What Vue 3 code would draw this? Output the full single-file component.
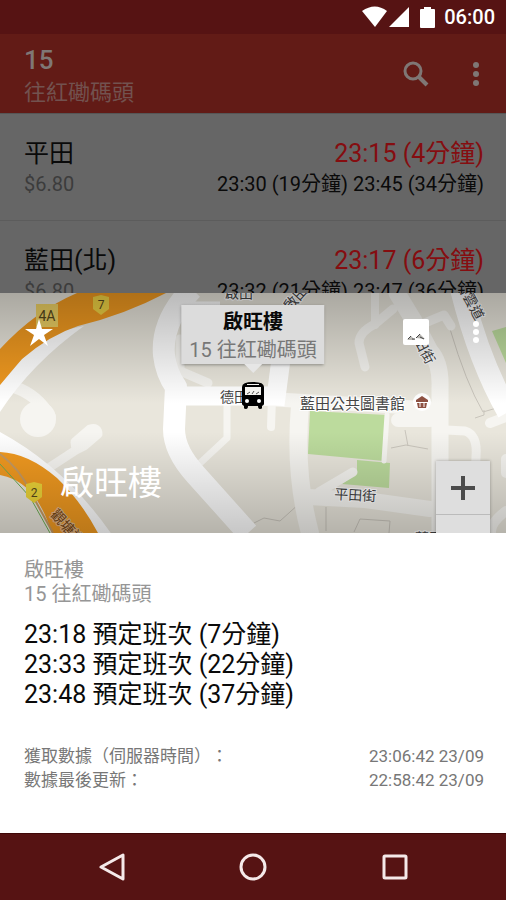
<template>
  <div class="phone">
    <header class="status-bar">
      <svg class="status-icons" viewBox="0 0 76 24" aria-hidden="true">
        <path d="M0 6 Q13 -3 25 6 L13 22 Z" />
        <path d="M47 2 V22 H27 Z" />
        <path d="M59 4 H62 V2 H69 V4 H72 Q73 4 73 5 V22 Q73 23 72 23 H59 Q58 23 58 22 V5 Q58 4 59 4 Z" />
      </svg>
      <time class="clock">06:00</time>
    </header>

    <main class="route-page">
      <div class="app-bar">
        <div class="app-title">
          <h1>{{ route.number }}</h1>
          <p>{{ route.direction }}</p>
        </div>
        <button class="icon-button" aria-label="搜尋">
          <svg width="26" height="26" viewBox="0 0 26 26">
            <circle cx="10" cy="10" r="8" fill="none" stroke="currentColor" stroke-width="3" />
            <path d="M16 16 L24 24" stroke="currentColor" stroke-width="4" />
          </svg>
        </button>
        <button class="icon-button more" aria-label="更多">
          <svg width="8" height="24" viewBox="0 0 8 24" fill="currentColor">
            <circle cx="4" cy="3" r="3" />
            <circle cx="4" cy="12" r="3" />
            <circle cx="4" cy="21" r="3" />
          </svg>
        </button>
      </div>
      <ul class="stop-list">
        <li v-for="stop in stops" :key="stop.name" class="stop">
          <div class="stop-line">
            <span>{{ stop.name }}</span>
            <span class="next">{{ stop.next }}</span>
          </div>
          <div class="stop-line small">
            <span class="fare">{{ stop.fare }}</span>
            <span>{{ stop.later }}</span>
          </div>
        </li>
      </ul>
    </main>

    <section class="sheet">
      <div class="map">
        <svg class="map-canvas" viewBox="0 0 506 240" preserveAspectRatio="xMidYMid slice" aria-hidden="true">
          <defs>
            <linearGradient id="scrim" x1="0" y1="0" x2="0" y2="1">
              <stop offset="0" stop-color="#000" stop-opacity="0.27" />
              <stop offset="0.46" stop-color="#000" stop-opacity="0" />
              <stop offset="0.58" stop-color="#000" stop-opacity="0" />
              <stop offset="1" stop-color="#000" stop-opacity="0.22" />
            </linearGradient>
          </defs>
          <rect width="506" height="240" fill="#e9e6dc" />

          <!-- footpaths and plot lines -->
          <g fill="none" stroke="#c9c5bc" stroke-width="1">
            <path d="M450 36 Q466 90 483 119 L500 114" />
            <path d="M391 155 L406 152 L428 156 M405 137 L408 153" />
            <path d="M254 230 L264 225 L280 228 L300 210 M326 214 V238 M354 239 L360 226 L390 228 L389 240" />
            <path d="M475 125 L484 122 V117" />
          </g>

          <!-- parks -->
          <g fill="#bcdb9d">
            <path d="M310 118 L387 122 L384 168 L308 161 Z" />
            <path d="M357 167 L390 170 L389 195 L342 191 L357 180 Z" />
            <path d="M492 38 L506 34 V70 Z" />
          </g>

          <!-- minor streets -->
          <g fill="none" stroke="#f6f5f1" stroke-linecap="round" stroke-linejoin="round">
            <path d="M14 94 Q38 102 50 124" stroke-width="12" />
            <circle cx="38" cy="126" r="15" fill="#f6f5f1" stroke-width="6" />
            <path d="M50 174 L76 157 L75 149 L90 136 Q98 134 98 141 L84 153 L76 157" stroke-width="9" />
            <path d="M365 74 L359 50 Q359 39 375 31 L393 16" stroke-width="9" />
            <path d="M375 0 V32" stroke-width="8" />
            <path d="M397 0 L414 28 L430 58 Q441 70 440 95 V240" stroke-width="17" />
            <path d="M420 32 L444 22 L451 33" stroke-width="9" />
            <path d="M180 46 V78 L208 90" stroke-width="9" />
            <path d="M227 112 V145 L198 172" stroke-width="7" />
            <path d="M272 105 L271 134" stroke-width="8" />
            <path d="M300 113 Q294 180 310 240" stroke-width="18" />
            <path d="M252 105 L438 116" stroke-width="14" />
            <path d="M308 204 L365 207 L430 216" stroke-width="16" />
            <path d="M319 199 L353 179" stroke-width="9" />
            <path d="M387 122 L384 168" stroke-width="5" />
            <path d="M446 137 L465 138 Q478 142 476 164 L475 190" stroke-width="9" />
            <path d="M490 130 L506 124 M506 166 V180 M506 218 Q490 230 491 240" stroke-width="10" />
            <path d="M398 127 H430" stroke-width="14" />
          </g>

          <!-- main roads -->
          <g fill="none" stroke="#fff" stroke-linejoin="round">
            <path d="M192 -4 Q161 28 164 62 Q166 80 176 94 L174 136 Q174 158 196 182 L248 240" stroke-width="22" />
            <path d="M168 103 H280" stroke-width="19" />
            <path d="M184 12 H220" stroke-width="7" />
            <path d="M281 66 L275 112" stroke-width="19" />
            <path d="M461 -4 Q479 68 508 119" stroke-width="22" />
            <path d="M-6 146 Q58 180 104 246" stroke-width="18" />
          </g>
          <path d="M0 119 Q32 70 84 33 L50 40 L22 66 L0 92 Z" fill="#fff" />

          <!-- highways -->
          <path d="M0 56 Q35 18 77 0 H166 Q124 22 78 33 Q50 42 22 66 Q15 74 0 92 Z" fill="#f19a20" />
          <path d="M0 159 Q28 160 57 185 Q81 208 98 240 H52 Q42 210 28 196 Q14 184 0 182 Z" fill="#f19a20" />
          <path d="M0 161 Q20 176 30 198 L53 240" fill="none" stroke="#c69a62" stroke-width="2" />
          <path d="M0 171 L30 204 L50 240" fill="none" stroke="#6cab50" stroke-width="1" />

          <!-- route shields -->
          <rect x="36" y="11" width="22" height="23" fill="#efd264" />
          <path d="M93 4 L101 2 L109 4 V16 L101 22 L93 16 Z" fill="#f2d545" />
          <path d="M26 191 L34 189 L42 191 V204 L34 210 L26 204 Z" fill="#eed538" />
          <g class="shield-text">
            <text x="47" y="28" font-size="14">4A</text>
            <text x="101" y="16" font-size="12">7</text>
            <text x="34" y="204" font-size="12">2</text>
          </g>

          <g class="street-text">
            <text x="220" y="109">德田街</text>
            <text class="place" x="300" y="116">藍田公共圖書館</text>
            <text x="334" y="206" transform="rotate(3 334 206)">平田街</text>
            <text x="290" y="19" transform="rotate(-48 290 19)">啟田道</text>
            <text x="407" y="35" transform="rotate(62 407 35)">啟田街</text>
            <text x="456" y="-9" transform="rotate(62 456 -9)">碧雲道</text>
            <text x="415" y="250">藍田(</text>
            <text x="225" y="5">啟田</text>
            <text class="highway" x="50" y="222" transform="rotate(48 50 222)">觀塘道</text>
          </g>

          <circle cx="422" cy="109" r="9" fill="#fff" />
          <path d="M416 107 L422 103 L428 107 V109 H416 Z M417 110 H427 L426 115 H418 Z" fill="#8e5142" />
          <path d="M420 110 V114 M424 110 V114" stroke="#fff" />

          <rect width="506" height="240" fill="url(#scrim)" />
        </svg>

        <div class="info-window">
          <strong>{{ selected }}</strong>
          <span>{{ route.number }} {{ route.direction }}</span>
        </div>
        <svg class="bus-pin" width="22" height="27" viewBox="0 0 22 27" aria-hidden="true">
          <path d="M0 5 Q0 0 11 0 Q22 0 22 5 V22 Q22 23 20 24 V26 Q20 27 18 27 Q16 27 16 24 H6 Q6 27 4 27 Q2 27 2 26 V24 Q0 23 0 22 Z" />
          <path d="M5 2 H17 V3 H5 Z M3 5 H19 V13 H3 Z" fill="#f4f3ef" />
          <path d="M5 12 L8 10 M10 12 L12 9 M14 12 L17 10" stroke="#555" />
          <circle cx="5" cy="19" r="2" fill="#fff" />
          <circle cx="17" cy="19" r="2" fill="#fff" />
        </svg>

        <div class="map-actions">
          <button class="icon-button" aria-label="收藏">
            <svg width="28" height="27" viewBox="0 0 28 27" fill="currentColor">
              <path d="M14 0 L17 10 H28 L19 16 L23 27 L14 20 L5 27 L9 16 L0 10 H11 Z" />
            </svg>
          </button>
          <button class="icon-button photo" aria-label="街景">
            <svg width="26" height="26" viewBox="0 0 26 26">
              <rect width="26" height="26" rx="2" fill="#fff" />
              <path d="M4 21 L8 17 L12 21 Z M13 19 L17 15 L22 20 Z" fill="#b9b7b3" />
              <path d="M5 20 L8 17 M9 20 H12 M13 19 L17 15 M17 18 L21 20" stroke="#444" fill="none" />
            </svg>
          </button>
          <button class="icon-button more" aria-label="更多">
            <svg width="8" height="24" viewBox="0 0 8 24" fill="currentColor">
              <circle cx="4" cy="4" r="3" />
              <circle cx="4" cy="12" r="3" />
              <circle cx="4" cy="20" r="3" />
            </svg>
          </button>
        </div>
        <h2 class="map-title">{{ selected }}</h2>
        <div class="zoom-control">
          <button aria-label="放大">
            <svg width="24" height="24" viewBox="0 0 24 24">
              <path d="M12 0 V24 M0 12 H24" stroke="#4b4b4b" stroke-width="4" />
            </svg>
          </button>
          <button aria-label="縮小"></button>
        </div>
      </div>

      <div class="details">
        <p class="caption">{{ selected }}<br>{{ route.number }} {{ route.direction }}</p>
        <ul class="departures">
          <li v-for="item in departures" :key="item">{{ item }}</li>
        </ul>
        <dl class="updates">
          <div v-for="row in updates" :key="row.label">
            <dt>{{ row.label }}</dt>
            <dd>{{ row.value }}</dd>
          </div>
        </dl>
      </div>
    </section>

    <nav class="nav-bar">
      <button aria-label="返回">
        <svg width="28" height="28" viewBox="0 0 28 28"><path d="M26 2 V26 L4 14 Z" /></svg>
      </button>
      <button aria-label="主畫面">
        <svg width="28" height="28" viewBox="0 0 28 28"><circle cx="14" cy="14" r="12" /></svg>
      </button>
      <button aria-label="概覽">
        <svg width="28" height="28" viewBox="0 0 28 28"><rect x="3" y="3" width="22" height="22" rx="1" /></svg>
      </button>
    </nav>
  </div>
</template>

<script setup>
const route = { number: '15', direction: '往紅磡碼頭' };

const stops = [
  { name: '平田', fare: '$6.80', next: '23:15 (4分鐘)', later: '23:30 (19分鐘) 23:45 (34分鐘)' },
  { name: '藍田(北)', fare: '$6.80', next: '23:17 (6分鐘)', later: '23:32 (21分鐘) 23:47 (36分鐘)' }
];

const selected = '啟旺樓';

const departures = [
  '23:18 預定班次 (7分鐘)',
  '23:33 預定班次 (22分鐘)',
  '23:48 預定班次 (37分鐘)'
];

const updates = [
  { label: '獲取數據（伺服器時間）：', value: '23:06:42 23/09' },
  { label: '數據最後更新：', value: '22:58:42 23/09' }
];
</script>

<style>
body {
  margin: 0;
}
</style>

<style scoped>
.phone {
  display: flex;
  flex-direction: column;
  height: 100vh;
  min-height: 760px;
  overflow: hidden;
  background: #666;
  color: #0a0a0a;
  font-family: Roboto, "Noto Sans CJK TC", sans-serif;
}

h1,
h2,
p,
ul,
dl,
dd {
  margin: 0;
  padding: 0;
}

ul {
  list-style: none;
}

button {
  display: flex;
  align-items: center;
  justify-content: center;
  padding: 0;
  border: 0;
  background: none;
  color: inherit;
  cursor: pointer;
}

.status-bar {
  display: flex;
  flex: none;
  align-items: center;
  justify-content: flex-end;
  gap: 6px;
  height: 34px;
  padding-right: 11px;
  background: #561313;
  color: #fff;
}

.status-icons {
  width: 76px;
  height: 24px;
  fill: #fff;
}

.clock {
  font-size: 20px;
  font-weight: 500;
  line-height: 34px;
}

.route-page {
  display: flex;
  flex: 1 1 0;
  flex-direction: column;
  min-height: 0;
  overflow: hidden;
}

.app-bar {
  display: flex;
  flex: none;
  align-items: center;
  box-sizing: border-box;
  height: 79px;
  padding: 0 6px 0 24px;
  background: #621b16;
  color: #7f7775;
}

.app-title {
  flex: 1;
  padding-top: 6px;
}

.app-title h1 {
  font-size: 26px;
  font-weight: 500;
  line-height: 32px;
}

.app-title p {
  color: #72524f;
  font-size: 22px;
  line-height: 34px;
}

.icon-button {
  width: 48px;
  height: 48px;
}

.app-bar .more {
  margin-left: 12px;
}

.stop-list {
  border-top: 1px solid #565656;
}

.stop {
  box-sizing: border-box;
  height: 107px;
  padding: 24px 22px 0 24px;
  border-bottom: 1px solid #5c5c5c;
}

.stop-line {
  display: flex;
  justify-content: space-between;
  font-size: 25px;
  line-height: 32px;
}

.stop-line.small {
  font-size: 20px;
  line-height: 28px;
}

.next {
  color: #850d10;
}

.fare {
  color: #3c3c3c;
}

.sheet {
  flex: none;
  background: #fff;
}

.map {
  position: relative;
  height: 240px;
  overflow: hidden;
}

.map-canvas {
  position: absolute;
  inset: 0;
  width: 100%;
  height: 100%;
}

.shield-text {
  fill: #57481c;
  text-anchor: middle;
}

.street-text {
  fill: #444;
  font-size: 14px;
  stroke: #fff;
  stroke-width: 2px;
  paint-order: stroke;
}

.street-text .place {
  font-size: 15px;
}

.street-text .highway {
  fill: #76440f;
  stroke: #e5b98a;
}

.info-window {
  position: absolute;
  top: 12px;
  left: 50%;
  display: flex;
  flex-direction: column;
  align-items: center;
  box-sizing: border-box;
  height: 59px;
  padding: 3px 8px;
  transform: translateX(-50%);
  background: #dcdcdc;
  box-shadow: 0 1px 3px rgba(0, 0, 0, 0.35);
  font-size: 20px;
  line-height: 28px;
  white-space: nowrap;
}

.info-window::after {
  position: absolute;
  top: 59px;
  left: 50%;
  border: 9px solid transparent;
  border-top-color: #e6e6e6;
  border-bottom: 0;
  transform: translateX(-50%);
  content: "";
}

.info-window strong {
  font-weight: 700;
}

.info-window span {
  color: #777;
}

.bus-pin {
  position: absolute;
  top: 89px;
  left: 50%;
  transform: translateX(-50%);
}

.map-actions {
  position: absolute;
  top: 15px;
  right: 6px;
  left: 15px;
  display: flex;
  color: #fff;
}

.map-actions .photo {
  margin-left: auto;
}

.map-actions .more {
  margin-left: 12px;
}

.map-title {
  position: absolute;
  bottom: 26px;
  left: 60px;
  color: #fff;
  font-size: 34px;
  font-weight: 400;
  line-height: 48px;
}

.zoom-control {
  position: absolute;
  top: 168px;
  right: 16px;
  width: 54px;
  background: #dedede;
  box-shadow: 0 0 3px rgba(0, 0, 0, 0.3);
}

.zoom-control button {
  width: 100%;
  height: 53px;
}

.zoom-control button + button {
  border-top: 1px solid #bbb;
}

.details {
  padding: 25px 22px 41px 24px;
}

.caption {
  color: #969696;
  font-size: 20px;
  line-height: 24px;
}

.departures {
  margin-top: 14px;
  font-size: 25px;
  line-height: 30px;
}

.updates {
  margin-top: 34px;
  color: #777;
  font-size: 17px;
  line-height: 24px;
  text-spacing-trim: space-all;
}

.updates div {
  display: flex;
  justify-content: space-between;
}

.nav-bar {
  display: flex;
  flex: none;
  align-items: center;
  justify-content: center;
  box-sizing: border-box;
  height: 67px;
  border-top: 1px solid #400808;
  background: #561313;
}

.nav-bar button {
  width: 28%;
  height: 100%;
}

.nav-bar svg {
  fill: none;
  stroke: #f5e9e9;
  stroke-width: 3;
  stroke-linejoin: round;
}
</style>
